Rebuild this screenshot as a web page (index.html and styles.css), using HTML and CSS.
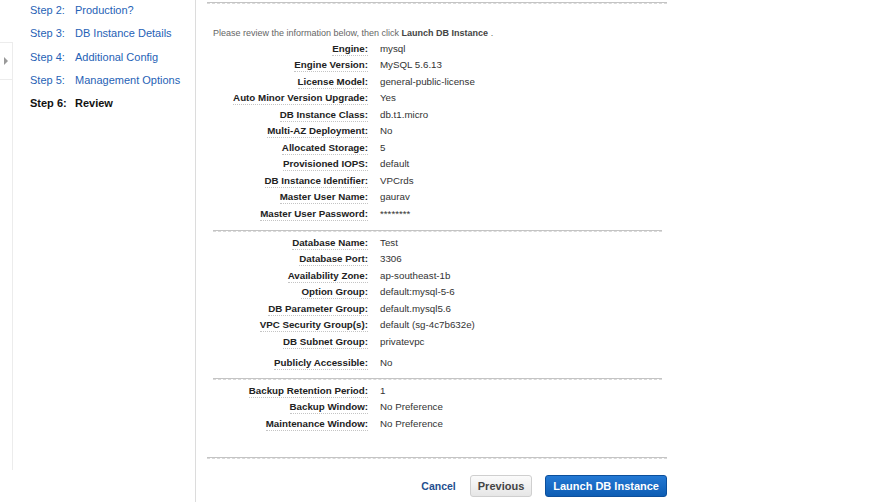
FILE: index.html
```html
<!DOCTYPE html>
<html lang="en">
<head>
  <meta charset="UTF-8">
  <title>Launch DB Instance - Review</title>
  <link rel="stylesheet" href="styles.css">
</head>
<body>

  <div class="sidebar">
    <div class="collapse">
      <div class="collapse-tab"><span class="arrow"></span></div>
    </div>

    <ul class="steps">
      <li><span class="step-no">Step 2:</span><a href="#">Production?</a></li>
      <li><span class="step-no">Step 3:</span><a href="#">DB Instance Details</a></li>
      <li><span class="step-no">Step 4:</span><a href="#">Additional Config</a></li>
      <li><span class="step-no">Step 5:</span><a href="#">Management Options</a></li>
      <li class="current"><span class="step-no">Step 6:</span>Review</li>
    </ul>
  </div>

  <div class="main">
    <div class="rule"></div>

    <p class="intro">Please review the information below, then click <b>Launch DB Instance</b> .</p>

    <div class="review">
      <div class="row"><span class="key"><span>Engine:</span></span><span class="val">mysql</span></div>
      <div class="row"><span class="key"><span>Engine Version:</span></span><span class="val">MySQL 5.6.13</span></div>
      <div class="row"><span class="key"><span>License Model:</span></span><span class="val">general-public-license</span></div>
      <div class="row"><span class="key"><span>Auto Minor Version Upgrade:</span></span><span class="val">Yes</span></div>
      <div class="row"><span class="key"><span>DB Instance Class:</span></span><span class="val">db.t1.micro</span></div>
      <div class="row"><span class="key"><span>Multi-AZ Deployment:</span></span><span class="val">No</span></div>
      <div class="row"><span class="key"><span>Allocated Storage:</span></span><span class="val">5</span></div>
      <div class="row"><span class="key"><span>Provisioned IOPS:</span></span><span class="val">default</span></div>
      <div class="row"><span class="key"><span>DB Instance Identifier:</span></span><span class="val">VPCrds</span></div>
      <div class="row"><span class="key"><span>Master User Name:</span></span><span class="val">gaurav</span></div>
      <div class="row"><span class="key"><span>Master User Password:</span></span><span class="val">********</span></div>
    </div>

    <div class="rule inner first"></div>

    <div class="review section">
      <div class="row"><span class="key"><span>Database Name:</span></span><span class="val">Test</span></div>
      <div class="row"><span class="key"><span>Database Port:</span></span><span class="val">3306</span></div>
      <div class="row"><span class="key"><span>Availability Zone:</span></span><span class="val">ap-southeast-1b</span></div>
      <div class="row"><span class="key"><span>Option Group:</span></span><span class="val">default:mysql-5-6</span></div>
      <div class="row"><span class="key"><span>DB Parameter Group:</span></span><span class="val">default.mysql5.6</span></div>
      <div class="row"><span class="key"><span>VPC Security Group(s):</span></span><span class="val">default (sg-4c7b632e)</span></div>
      <div class="row"><span class="key"><span>DB Subnet Group:</span></span><span class="val">privatevpc</span></div>
      <div class="row spaced"><span class="key"><span>Publicly Accessible:</span></span><span class="val">No</span></div>
    </div>

    <div class="rule inner second"></div>

    <div class="review section">
      <div class="row"><span class="key"><span>Backup Retention Period:</span></span><span class="val">1</span></div>
      <div class="row"><span class="key"><span>Backup Window:</span></span><span class="val">No Preference</span></div>
      <div class="row"><span class="key"><span>Maintenance Window:</span></span><span class="val">No Preference</span></div>
    </div>

    <div class="rule bottom"></div>

    <div class="actions">
      <a href="#" class="cancel">Cancel</a>
      <button class="btn">Previous</button>
      <button class="btn primary">Launch DB Instance</button>
    </div>
  </div>

</body>
</html>
```

FILE: styles.css
```css
* {
  box-sizing: border-box;
}

body {
  margin: 0;
  padding: 0;
  font-family: 'Liberation Sans', Arial, sans-serif;
  background: #fff;
  color: #222;
  display: flex;
  height: 502px;
  overflow: hidden;
}

/* left wizard navigation */
.sidebar {
  width: 196px;
  flex-shrink: 0;
  border-right: 1px solid #dcdcdc;
  display: flex;
}

.collapse {
  width: 13px;
  margin-top: 42px;
  height: 428px;
  border-right: 1px solid #ececec;
}

.collapse-tab {
  height: 38px;
  border-top: 1px solid #ececec;
  border-bottom: 1px solid #ececec;
  display: flex;
  align-items: center;
  padding-left: 4px;
}

.arrow {
  width: 0;
  height: 0;
  border-top: 4px solid transparent;
  border-bottom: 4px solid transparent;
  border-left: 4px solid #9a9a9a;
}

.steps {
  list-style: none;
  margin: -1px 0 0 17px;
  padding: 0;
  font-size: 11px;
  line-height: 23.3px;
}

.steps li {
  display: flex;
  color: #1f62b6;
}

.step-no {
  width: 45px;
}

.steps a {
  color: #1f62b6;
  text-decoration: none;
}

.steps li.current {
  color: #111;
  font-weight: bold;
}

/* review panel */
.main {
  width: 460px;
  margin-left: 11px;
}

.rule {
  height: 2px;
  border-top: 1px solid #c4c4c4;
  border-bottom: 1px dashed #dadada;
  margin-top: 2px;
}

.rule.inner {
  margin-left: 6px;
  margin-right: 5px;
}

.rule.first {
  margin-top: 8px;
}

.rule.second {
  margin-top: 7px;
}

.rule.bottom {
  margin-top: 25px;
}

.intro {
  margin: 23px 0 0 6px;
  font-size: 9px;
  line-height: 12px;
  color: #666;
}

.intro b {
  color: #444;
}

.review {
  margin: 1.5px 0 0 6px;
  font-size: 9.75px;
}

.review.section {
  margin-top: 2.5px;
}

.row {
  display: flex;
  height: 16.5px;
  line-height: 16.5px;
}

.row.spaced {
  margin-top: 4.5px;
}

.key {
  width: 155px;
  text-align: right;
  font-weight: bold;
  color: #222;
}

.key span {
  border-bottom: 1px dotted #c4c4c4;
  padding-bottom: 1px;
}

.val {
  margin-left: 12px;
  color: #333;
}

/* wizard buttons */
.actions {
  margin-top: 15.5px;
  display: flex;
  justify-content: flex-end;
  align-items: center;
}

.cancel {
  color: #1f4f8f;
  font-size: 10.5px;
  font-weight: bold;
  text-decoration: none;
  margin-right: 14px;
}

.btn {
  height: 22px;
  padding: 0 7px;
  font-family: 'Liberation Sans', Arial, sans-serif;
  font-size: 11px;
  font-weight: bold;
  color: #444;
  background: linear-gradient(#fbfbfb, #e6e6e6);
  border: 1px solid #cfcfcf;
  border-radius: 3px;
  cursor: pointer;
}

.btn.primary {
  margin-left: 13px;
  padding: 0 7px;
  color: #fff;
  background: linear-gradient(#2479d4, #0d5db4);
  border-color: #0c4f9b;
}
```
